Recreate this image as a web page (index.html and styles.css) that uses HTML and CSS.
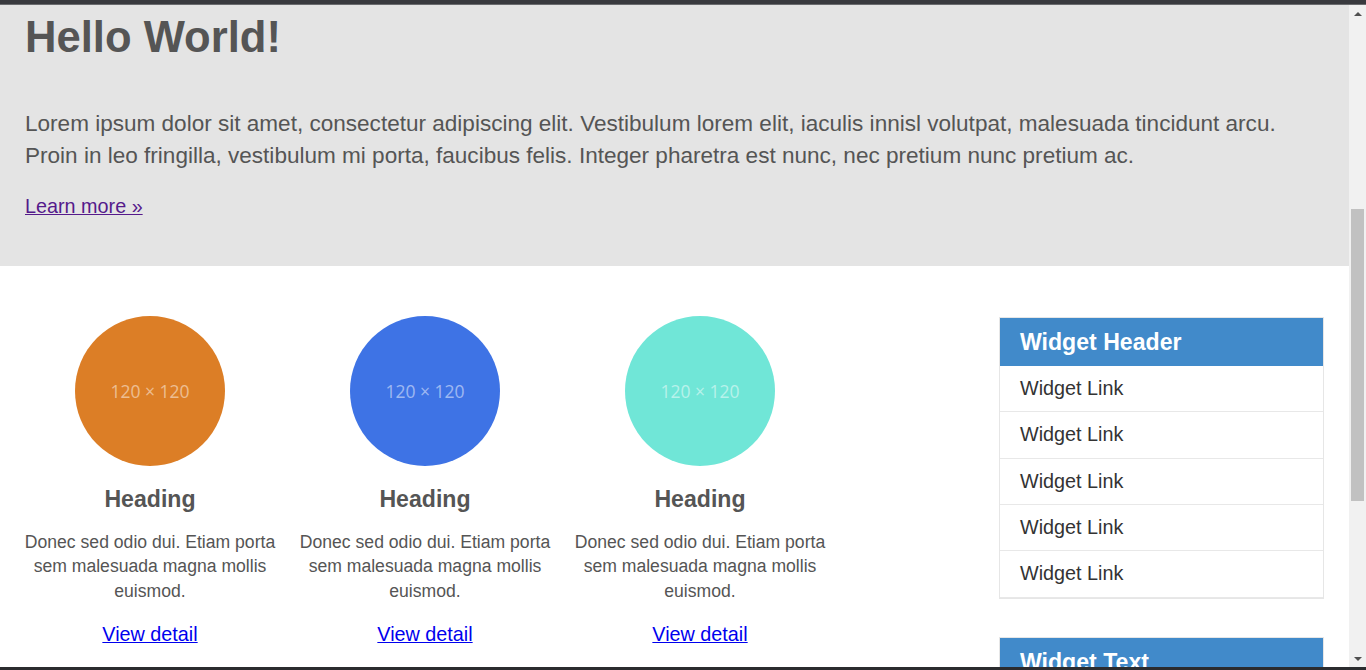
FILE: index.html
```html
<!DOCTYPE html>
<html lang="en">
<head>
<meta charset="utf-8">
<title>Hello World</title>
<link rel="stylesheet" href="styles.css">
</head>
<body>
<div class="frame-top"></div>
<div class="viewport">
  <div class="page">
    <section class="jumbotron">
      <h1 class="jumbo-title">Hello World!</h1>
      <p class="jumbo-lead">Lorem ipsum dolor sit amet, consectetur adipiscing elit. Vestibulum lorem elit, iaculis innisl volutpat, malesuada tincidunt arcu. Proin in leo fringilla, vestibulum mi porta, faucibus felis. Integer pharetra est nunc, nec pretium nunc pretium ac.</p>
      <p class="jumbo-more"><a class="link-visited" href="#">Learn more »</a></p>
    </section>
    <div class="main">
      <div class="features">
        <div class="feature">
          <div class="circle circle-orange"><span>120 × 120</span></div>
          <h3 class="feature-title">Heading</h3>
          <p class="feature-text">Donec sed odio dui. Etiam porta sem malesuada magna mollis euismod.</p>
          <p class="feature-more"><a class="link" href="#">View detail</a></p>
        </div>
        <div class="feature">
          <div class="circle circle-blue"><span>120 × 120</span></div>
          <h3 class="feature-title">Heading</h3>
          <p class="feature-text">Donec sed odio dui. Etiam porta sem malesuada magna mollis euismod.</p>
          <p class="feature-more"><a class="link" href="#">View detail</a></p>
        </div>
        <div class="feature">
          <div class="circle circle-teal"><span>120 × 120</span></div>
          <h3 class="feature-title">Heading</h3>
          <p class="feature-text">Donec sed odio dui. Etiam porta sem malesuada magna mollis euismod.</p>
          <p class="feature-more"><a class="link" href="#">View detail</a></p>
        </div>
      </div>
      <aside class="sidebar">
        <div class="widget">
          <div class="widget-header">Widget Header</div>
          <ul class="widget-list">
            <li class="widget-item">Widget Link</li>
            <li class="widget-item">Widget Link</li>
            <li class="widget-item">Widget Link</li>
            <li class="widget-item">Widget Link</li>
            <li class="widget-item">Widget Link</li>
          </ul>
        </div>
        <div class="widget widget-second">
          <div class="widget-header">Widget Text</div>
          <div class="widget-body">Lorem ipsum dolor sit amet, consectetur adipiscing elit.</div>
        </div>
      </aside>
    </div>
  </div>
  <div class="scrollbar">
    <div class="sb-button"><span class="sb-arrow-up"></span></div>
    <div class="sb-track"><div class="sb-thumb"></div></div>
    <div class="sb-button"><span class="sb-arrow-down"></span></div>
  </div>
</div>
<div class="frame-bottom"></div>
</body>
</html>
```

FILE: styles.css
```css
* { box-sizing: border-box; }

html, body {
  margin: 0;
  padding: 0;
  height: 670px;
  overflow: hidden;
  background: #ffffff;
  font-family: "Liberation Sans", Arial, sans-serif;
}

.frame-top {
  height: 5px;
  background: #393a3e;
  border-bottom: 1px solid #6a6b6e;
}

.frame-bottom {
  height: 3px;
  background: #2b2c2f;
}

.viewport {
  display: flex;
  height: 662px;
  overflow: hidden;
}

.page {
  flex: 1;
  min-width: 0;
  overflow: hidden;
  background: #ffffff;
}

/* Jumbotron */
.jumbotron {
  background: #e4e4e4;
  color: #555555;
  padding: 8px 25px 46px 25px;
  height: 261px;
}

.jumbo-title {
  margin: 0 0 47px 0;
  font-size: 43.6px;
  line-height: 48.4px;
  font-weight: bold;
  color: #555555;
}

.jumbo-lead {
  margin: 0 0 20px 0;
  font-size: 22.55px;
  line-height: 31.4px;
}

.jumbo-more {
  margin: 0;
  font-size: 19.8px;
  line-height: 28.3px;
  padding-top: 1px;
}

.link-visited { color: #551a8b; text-decoration: underline; }
.link { color: #0000ee; text-decoration: underline; }

/* Main */
.main {
  display: flex;
  align-items: flex-start;
  padding-top: 50px;
}

.features {
  display: flex;
  padding-left: 12.5px;
}

.feature {
  width: 275px;
  padding: 0 10px;
  text-align: center;
  color: #555555;
}

.circle {
  width: 150px;
  height: 150px;
  border-radius: 50%;
  margin: 0 auto;
  display: flex;
  align-items: center;
  justify-content: center;
  font-family: "Open Sans", "Liberation Sans", sans-serif;
  font-size: 17.5px;
  color: rgba(255, 255, 255, 0.5);
}

.circle-orange { background: #dc7e26; }
.circle-blue { background: #3e73e5; }
.circle-teal { background: #70e6d7; }

.feature-title {
  margin: 21px 0 17.4px 0;
  font-size: 23.1px;
  line-height: 25.4px;
  font-weight: bold;
  color: #555555;
}

.feature-text {
  margin: 0 0 16.3px 0;
  font-size: 17.6px;
  line-height: 24.6px;
}

.feature-more {
  margin: 0;
  font-size: 19.8px;
  line-height: 28.3px;
}

/* Sidebar */
.sidebar {
  width: 325px;
  margin-left: auto;
  margin-right: 25px;
  margin-top: 0.7px;
}

.widget {
  border: 1px solid #e6e6e6;
  background: #ffffff;
}

.widget-second {
  margin-top: 38px;
}

.widget-header {
  background: #418aca;
  color: #ffffff;
  font-weight: bold;
  font-size: 23.1px;
  line-height: 28px;
  padding: 10px 20px;
}

.widget-list {
  list-style: none;
  margin: 0;
  padding: 0;
}

.widget-item {
  font-size: 19.8px;
  line-height: 23.4px;
  padding: 11px 20px;
  color: #333333;
  border-bottom: 1px solid #e8e8e8;
}

.widget-body {
  padding: 12px 20px;
  font-size: 17.6px;
  line-height: 24.6px;
  color: #555555;
}

/* Scrollbar */
.scrollbar {
  width: 17px;
  background: #f1f1f1;
  display: flex;
  flex-direction: column;
}

.sb-button {
  height: 17px;
  display: flex;
  align-items: center;
  justify-content: center;
}

.sb-arrow-up {
  width: 0;
  height: 0;
  border-left: 4px solid transparent;
  border-right: 4px solid transparent;
  border-bottom: 4px solid #505050;
}

.sb-arrow-down {
  width: 0;
  height: 0;
  border-left: 4px solid transparent;
  border-right: 4px solid transparent;
  border-top: 4px solid #505050;
}

.sb-track {
  flex: 1;
  padding: 0 2px;
}

.sb-thumb {
  margin-top: 187px;
  height: 292px;
  background: #c1c1c1;
}
```
